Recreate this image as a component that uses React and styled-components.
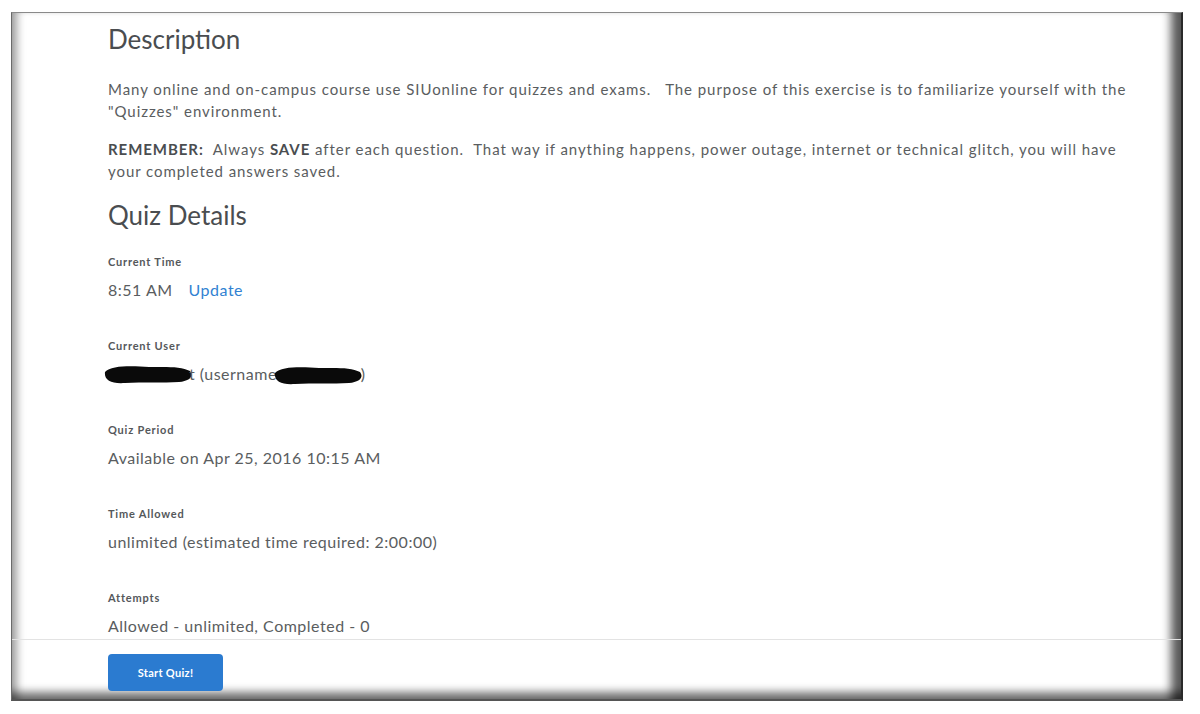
import React from 'react'
import styled, { createGlobalStyle } from 'styled-components'

const GlobalStyle = createGlobalStyle`
  html, body {
    margin: 0;
    padding: 0;
    background: #ffffff;
  }
  body {
    font-family: Lato, "Open Sans", "Liberation Sans", sans-serif;
    color: #5a5d60;
  }
`

const Page = styled.div`
  width: 1200px;
  height: 714px;
  padding: 12px 0 0 11px;
  box-sizing: border-box;
`

const Frame = styled.div`
  width: 1172px;
  height: 689px;
  box-sizing: border-box;
  display: flex;
  flex-direction: column;
  background: #ffffff;
  border: 1px solid #6a6a6a;
  border-top-color: #8a8a8a;
  border-right: 2px solid #2a2a2a;
  border-bottom: 2px solid #555;
  box-shadow:
    inset 10px 0 8px -5px rgba(0, 0, 0, 0.38),
    inset -18px 0 10px -8px rgba(0, 0, 0, 0.65),
    inset 0 -14px 9px -7px rgba(0, 0, 0, 0.55);
  overflow: hidden;
`

const Content = styled.div`
  flex: 1;
  overflow: hidden;
  padding: 11px 30px 0 96px;
`

const Heading = styled.h2`
  margin: ${(p) => p.$top || 0}px 0 0;
  font-size: 26px;
  font-weight: 400;
  line-height: 31px;
  color: #4a4d50;
`

const Paragraph = styled.p`
  margin: ${(p) => p.$top || 0}px 0 0;
  font-size: 15px;
  line-height: 22px;
  letter-spacing: 0.94px;
  max-width: 1030px;
`

const Strong = styled.strong`
  font-weight: 700;
  color: #4a4d50;
`

const Field = styled.div`
  margin-top: ${(p) => p.$top || 40}px;
  display: flex;
  flex-direction: column;
  gap: 12px;
`

const Label = styled.div`
  font-size: 11px;
  font-weight: 700;
  line-height: 13px;
  letter-spacing: 0.8px;
  color: #55585b;
`

const Value = styled.div`
  height: 19px;
  font-size: 16px;
  line-height: 19px;
  letter-spacing: 0.5px;
  display: flex;
  align-items: center;
`

const Link = styled.a`
  color: #3182d2;
  margin-left: 16px;
  text-decoration: none;
`

const Scribble = styled.svg`
  flex: none;
  margin: ${(p) => p.$m};
`

const Footer = styled.div`
  height: 60px;
  flex: none;
  border-top: 1px solid #e3e3e3;
  padding: 14px 0 0 96px;
  box-sizing: border-box;
`

const Button = styled.button`
  width: 115px;
  height: 37px;
  border: none;
  border-radius: 4px;
  background: #2b7bd0;
  color: #ffffff;
  font-family: Lato, "Liberation Sans", sans-serif;
  font-size: 11px;
  font-weight: 700;
  letter-spacing: 0.3px;
  cursor: pointer;
`

const Blob = ({ width, m }) => (
  <Scribble $m={m} width={width} height="22" viewBox="0 0 90 22">
    <path
      d="M2 9 C 8 2, 30 3, 46 4 C 62 4, 78 3, 87 8 C 91 13, 87 18, 76 19 C 60 20, 40 19, 22 20 C 8 21, 1 17, 2 9 Z"
      fill="#0a0a0a"
    />
  </Scribble>
)

const details = [
  { label: 'Quiz Period', value: 'Available on Apr 25, 2016 10:15 AM' },
  { label: 'Time Allowed', value: 'unlimited (estimated time required: 2:00:00)' },
  { label: 'Attempts', value: 'Allowed - unlimited, Completed - 0' },
]

const App = () => {
  return (
    <Page>
      <GlobalStyle />
      <Frame>
        <Content>
          <Heading>Description</Heading>
          <Paragraph $top={23}>
            {'Many online and on-campus course use SIUonline for quizzes and exams.\u00a0\u00a0 The purpose of this exercise is to familiarize yourself with the "Quizzes" environment.'}
          </Paragraph>
          <Paragraph $top={16}>
            <Strong>REMEMBER:</Strong>{'\u00a0 Always '}<Strong>SAVE</Strong>
            {' after each question.\u00a0 That way if anything happens, power outage, internet or technical glitch, you will have your completed answers saved.'}
          </Paragraph>
          <Heading $top={18}>Quiz Details</Heading>

          <Field $top={24}>
            <Label>Current Time</Label>
            <Value>
              8:51 AM<Link href="#">Update</Link>
            </Value>
          </Field>

          <Field>
            <Label>Current User</Label>
            <Value>
              <Blob width={90} m="0 -4px 0 -5px" />
              t (username
              <Blob width={90} m="2px -2px 0 -4px" />
              )
            </Value>
          </Field>

          {details.map((d) => (
            <Field key={d.label}>
              <Label>{d.label}</Label>
              <Value>{d.value}</Value>
            </Field>
          ))}
        </Content>
        <Footer>
          <Button>Start Quiz!</Button>
        </Footer>
      </Frame>
    </Page>
  )
}

export default App
